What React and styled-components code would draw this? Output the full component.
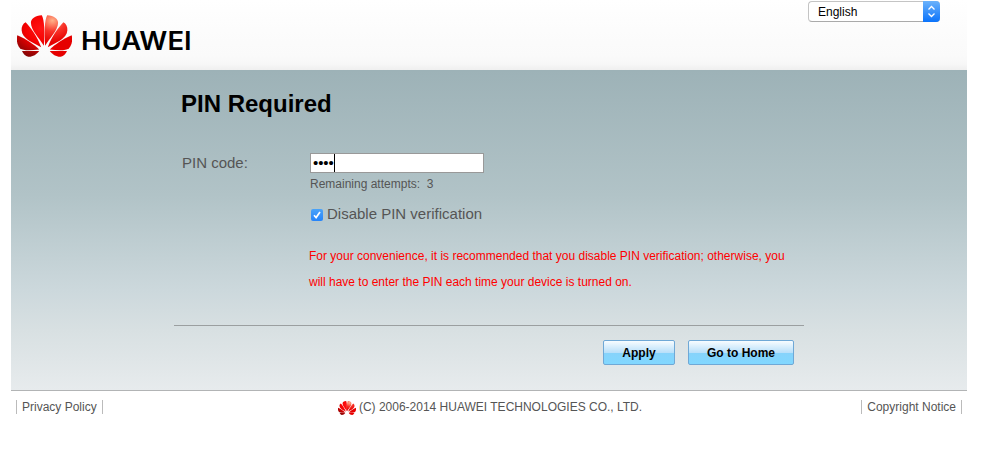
import React from "react";
import styled, { createGlobalStyle } from "styled-components";

const GlobalStyle = createGlobalStyle`
  * { box-sizing: border-box; }
  body {
    margin: 0;
    background: #fff;
    color: #555;
    font-family: "Liberation Sans", Arial, sans-serif;
    font-size: 12px;
  }
`;

const Page = styled.div`
  width: 956px;
  margin-left: 11px;
`;

const Header = styled.header`
  display: flex;
  justify-content: space-between;
  align-items: flex-start;
  height: 70px;
  padding: 0 27px 0 6px;
  background: linear-gradient(#ffffff 0, #fcfcfc 30px, #fafafa 56px, #f7f7f7 64px, #efefef 70px);
`;

const Brand = styled.div`
  display: flex;
  padding-top: 15px;
`;

const Wordmark = styled.span`
  margin: 11px 0 0 9px;
  font: 600 25px/30px Inter, sans-serif;
  color: #000;
  white-space: nowrap;
  transform: scaleX(1.1);
  transform-origin: 0 0;
`;

const LanguageSelect = styled.button`
  display: flex;
  width: 132px;
  height: 21px;
  margin: 1px 0 0;
  padding: 0;
  border: 1px solid #c4c4c4;
  border-bottom-color: #aaa;
  border-right: 0;
  border-radius: 4px;
  background: #fff;
  font: 12px/21px "Liberation Sans", Arial, sans-serif;
  color: #000;
  text-align: left;
`;

const LanguageName = styled.span`
  flex: 1;
  padding-left: 9px;
`;

const Stepper = styled.span`
  display: flex;
  align-items: center;
  justify-content: center;
  width: 17px;
  height: 21px;
  margin-top: -1px;
  border-radius: 0 4px 4px 0;
  background: linear-gradient(#6bb2fb, #0a73fb);
`;

const Main = styled.main`
  height: 321px;
  padding: 0 163px;
  border-bottom: 1px solid #b2b4b5;
  background: linear-gradient(#9db2b7 0, #b1c3c7 125px, #ccd8dc 220px, #d8e0e2 260px, #e7ebed 320px);
`;

const Title = styled.h1`
  margin: 0;
  padding: 19px 0 0 7px;
  font-size: 24px;
  line-height: 30px;
  color: #000;
`;

const Form = styled.div`
  display: grid;
  grid-template-columns: 128px 1fr;
  height: 207px;
  padding: 34px 0 0 8px;
  border-bottom: 1px solid #9b9fa0;
`;

const Label = styled.label`
  font-size: 15px;
  line-height: 20px;
`;

const PinField = styled.div`
  display: flex;
  align-items: center;
  width: 174px;
  height: 20px;
  padding-left: 2px;
  border: 1px solid #999;
  background: #fff;
  color: #000;
  font-size: 15px;
  line-height: 18px;
  letter-spacing: -0.1px;
`;

const Caret = styled.span`
  width: 1px;
  height: 18px;
  background: #000;
`;

const Attempts = styled.div`
  margin-top: 3px;
  line-height: 16px;
  white-space: pre;
`;

const CheckRow = styled.div`
  display: flex;
  align-items: center;
  gap: 4px;
  margin-top: 12px;
  padding-left: 1px;
  font-size: 15px;
  line-height: 20px;
`;

const CheckBox = styled.span`
  display: flex;
  width: 12px;
  height: 12px;
  margin-top: 2px;
  border-radius: 2px;
  background: linear-gradient(#4ba3f8, #2684fa);
`;

const Notice = styled.p`
  width: 485px;
  margin: 19px 0 0 -1px;
  color: #f00;
  line-height: 26px;
`;

const Actions = styled.div`
  display: flex;
  justify-content: flex-end;
  gap: 13px;
  padding: 14px 10px 0 0;
`;

const Button = styled.button`
  width: ${(p) => p.$width}px;
  height: 25px;
  padding: 1px 0 0;
  border: 1px solid #6fa8d6;
  border-radius: 2px;
  background: linear-gradient(#f8fcff 0, #b9e0fa 50%, #86d3fb 51%, #81d7ff 100%);
  color: #000;
  font: bold 12px/22px "Liberation Sans", Arial, sans-serif;
`;

const Footer = styled.footer`
  display: grid;
  grid-template-columns: 1fr auto 1fr;
  align-items: start;
  padding: 9px 5px 0;
`;

const FooterLink = styled.a`
  justify-self: ${(p) => p.$side};
  padding: 0 5px;
  border: solid #bbb;
  border-width: 0 1px;
  line-height: 14px;
`;

const Copyright = styled.span`
  display: flex;
  align-items: flex-start;
  gap: 3px;
  padding-left: 2px;
  line-height: 14px;
`;

const SmallMark = styled.span`
  display: flex;
  padding-top: 1px;
`;

function Flower({ id, width, height }) {
  const half = (
    <>
      <path d="M81 119C68 94 42 66 42 40C42 26 54 16 75 14C83 30 84 76 81 119Z" />
      <path d="M73 124C48 110 15 94 14 66C13 53 18 43 26 38C42 56 61 88 73 124Z" />
      <path d="M67 132C45 135 20 138 9 128C-1 115-2 96 1 83C27 96 51 114 67 132Z" />
      <path d="M67 137C59 149 47 158 34 157C25 154 19 147 15 137Z" />
    </>
  );
  return (
    <svg width={width} height={height} viewBox="0 13 166 145" preserveAspectRatio="none">
      <defs>
        <radialGradient id={id} gradientUnits="userSpaceOnUse" cx="72" cy="60" r="98">
          <stop offset="0" stopColor="#ff1414" />
          <stop offset=".5" stopColor="#f40000" />
          <stop offset="1" stopColor="#8c0505" />
        </radialGradient>
        <radialGradient id={id + "r"} gradientUnits="userSpaceOnUse" cx="59" cy="32" r="75">
          <stop offset="0" stopColor="#ffb28a" />
          <stop offset=".5" stopColor="#f8342a" />
          <stop offset="1" stopColor="#e60000" />
        </radialGradient>
      </defs>
      <g fill={`url(#${id})`}>{half}</g>
      <g fill={`url(#${id}r)`} transform="translate(166 0) scale(-1 1)">{half}</g>
    </svg>
  );
}

export default function App() {
  return (
    <>
      <GlobalStyle />
      <Page>
        <Header>
          <Brand>
            <Flower id="logo" width={55} height={42} />
            <Wordmark>HUAWEI</Wordmark>
          </Brand>
          <LanguageSelect>
            <LanguageName>English</LanguageName>
            <Stepper>
              <svg width="9" height="13" viewBox="0 0 9 13" fill="none" stroke="#fff" strokeWidth="1.3">
                <path d="M1.5 4.5 4.5 1.5 7.5 4.5M1.5 8.5 4.5 11.5 7.5 8.5" />
              </svg>
            </Stepper>
          </LanguageSelect>
        </Header>
        <Main>
          <Title>PIN Required</Title>
          <Form>
            <Label>PIN code:</Label>
            <div>
              <PinField>
                ••••
                <Caret />
              </PinField>
              <Attempts>{"Remaining attempts:  3"}</Attempts>
              <CheckRow>
                <CheckBox>
                  <svg width="12" height="12" viewBox="0 0 12 12" fill="none" stroke="#fff" strokeWidth="1.7">
                    <path d="M3 6.3 5.1 8.6 9 3" />
                  </svg>
                </CheckBox>
                Disable PIN verification
              </CheckRow>
              <Notice>
                For your convenience, it is recommended that you disable PIN verification; otherwise, you
                will have to enter the PIN each time your device is turned on.
              </Notice>
            </div>
          </Form>
          <Actions>
            <Button $width={72}>Apply</Button>
            <Button $width={106}>Go to Home</Button>
          </Actions>
        </Main>
        <Footer>
          <FooterLink $side="start">Privacy Policy</FooterLink>
          <Copyright>
            <SmallMark>
              <Flower id="mark" width={18} height={14} />
            </SmallMark>
            (C) 2006-2014 HUAWEI TECHNOLOGIES CO., LTD.
          </Copyright>
          <FooterLink $side="end">Copyright Notice</FooterLink>
        </Footer>
      </Page>
    </>
  );
}
